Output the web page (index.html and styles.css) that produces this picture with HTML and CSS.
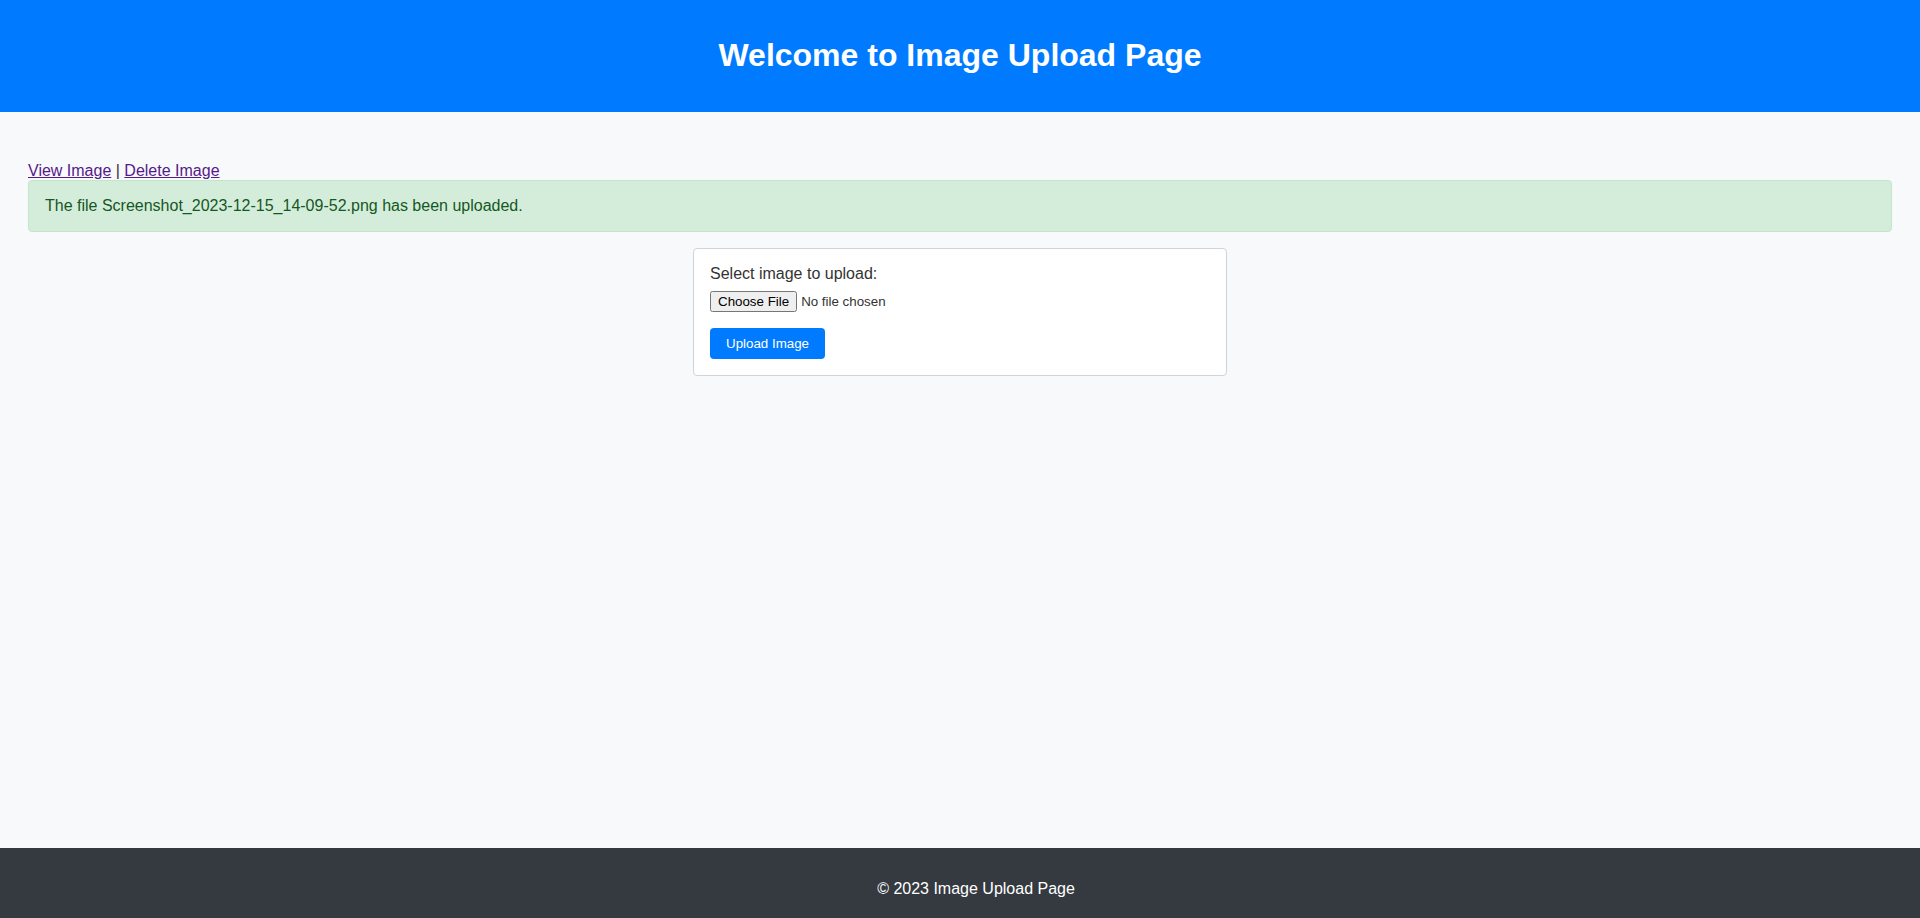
FILE: index.html
```html
<!DOCTYPE html>
<html lang="en">
<head>
<meta charset="utf-8">
<title>Image Upload Page</title>
<link rel="stylesheet" href="styles.css">
</head>
<body>
<header class="site-header">
  <h1 class="site-title">Welcome to Image Upload Page</h1>
</header>
<main class="main">
  <div class="nav-links"><a href="#" class="link">View Image</a> | <a href="#" class="link">Delete Image</a></div>
  <div class="alert">The file Screenshot_2023-12-15_14-09-52.png has been uploaded.</div>
  <form class="upload-card" onsubmit="return false;">
    <label class="upload-label" for="file">Select image to upload:</label>
    <input class="file-input" type="file" id="file" name="file">
    <button class="upload-btn" type="submit">Upload Image</button>
  </form>
</main>
<footer class="site-footer">
  <p class="footer-text">© 2023 Image Upload Page</p>
</footer>
</body>
</html>
```

FILE: styles.css
```css
html, body {
  margin: 0;
  padding: 0;
}
html {
  overflow: hidden;
}
body {
  font-family: "Liberation Sans", Arial, sans-serif;
  font-size: 16px;
  color: #333;
  background: #f8f9fa;
  min-height: 100vh;
  display: flex;
  flex-direction: column;
}
.site-header {
  background: #007bff;
  color: #fff;
  padding: 16px;
  text-align: center;
}
.site-title {
  margin: 21.44px 0;
  font-size: 32px;
  font-weight: bold;
}
.main {
  flex: 1;
  padding: 50px 28px 0;
}
.nav-links {
  line-height: normal;
}
.link {
  color: #551a8b;
  text-decoration: underline;
}
.alert {
  margin-bottom: 16px;
  padding: 16px;
  background: #d4edda;
  border: 1px solid #c3e6cb;
  color: #155724;
  border-radius: 4px;
}
.upload-card {
  width: 500px;
  margin: 0 auto;
  padding: 16px;
  background: #fff;
  border: 1px solid #ced4da;
  border-radius: 4px;
  display: flex;
  flex-direction: column;
  align-items: flex-start;
}
.upload-label {
  display: block;
  margin-bottom: 8px;
}
.file-input {
  font-family: "Liberation Sans", Arial, sans-serif;
  font-size: 13.333px;
  margin: 0 0 16px;
}
.upload-btn {
  font-family: "Liberation Sans", Arial, sans-serif;
  font-size: 13.333px;
  background: #007bff;
  color: #fff;
  border: none;
  border-radius: 4px;
  padding: 8px 16px;
  cursor: pointer;
}
.site-footer {
  background: #343a40;
  color: #fff;
  height: 70px;
  box-sizing: border-box;
  padding: 32px 0 0 32px;
  text-align: center;
  flex-shrink: 0;
}
.footer-text {
  margin: 0;
}
```
